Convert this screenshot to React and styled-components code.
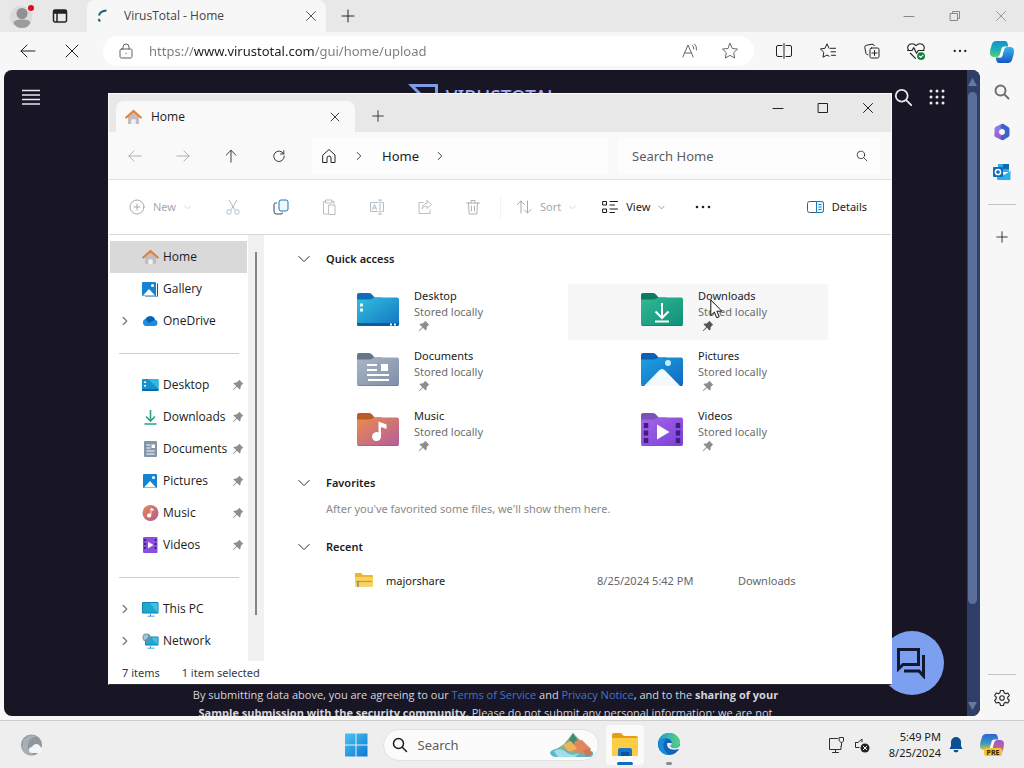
import { useState } from 'react'
import styled, { createGlobalStyle } from 'styled-components'


const GlobalStyle = createGlobalStyle`
	* {
		box-sizing: border-box;
	}

	body {
		margin: 0;
		overflow: hidden;
		font-family: 'Noto Sans', 'Open Sans', sans-serif;
		font-size: 11px;
		line-height: 16px;
		color: #1b1b1b;
	}

	button, input {
		font: inherit;
		color: inherit;
	}

	svg {
		display: block;
		flex: none;
	}
`

const Desktop = styled.div`
	height: 100vh;
	position: relative;
	display: flex;
	flex-direction: column;
	background-color: #f5f5f5;
`

const IconButton = styled.button`
	border: 0;
	padding: 0;
	background: none;
	flex: none;
	width: ${props => props.$width || 40}px;
	height: ${props => props.$height || 32}px;
	color: ${props => props.$color || '#222222'};
	display: flex;
	align-items: center;
	justify-content: center;
`

const Spacer = styled.div`
	flex: 1;
`

/* Browser */

const Browser = styled.section`
	flex: 1;
	min-height: 0;
	display: flex;
	flex-direction: column;
`

const TabStrip = styled.div`
	height: 32px;
	padding-left: 2px;
	background-color: #e8e8e8;
	display: flex;
	align-items: center;
`

const BrowserTab = styled.div`
	width: 239px;
	height: 32px;
	margin-left: 9px;
	padding: 0 2px 0 9px;
	border-radius: 8px 8px 0 0;
	background-color: #f7f7f7;
	color: #444444;
	font-family: 'Open Sans', sans-serif;
	font-size: 12px;
	display: flex;
	align-items: center;
	gap: 16px;
`

const BrowserColumns = styled.div`
	flex: 1;
	min-height: 0;
	display: flex;
`

const BrowserMain = styled.div`
	flex: 1;
	min-width: 0;
	padding: 0 0 4px 4px;
	background-color: #f7f7f7;
	display: flex;
	flex-direction: column;
`

const Toolbar = styled.div`
	height: 38px;
	padding-left: 4px;
	display: flex;
	align-items: center;
	gap: 4px;
`

const AddressBar = styled.label`
	flex: 1;
	height: 30px;
	margin: 0 6px 0 7px;
	padding: 0 4px 0 15px;
	border-radius: 15px;
	background-color: #ffffff;
	color: #5f5f5f;
	display: flex;
	align-items: center;
	gap: 15px;
`

const UrlInput = styled.input`
	flex: 1;
	min-width: 0;
	border: 0;
	padding: 0;
	outline: 0;
	font-size: 13px;
	line-height: 20px;
	color: transparent;
	background-image: linear-gradient(to right, #7b7b7b 45px, #1b1b1b 45px, #1b1b1b 166px, #7b7b7b 166px);
	background-clip: text;
	-webkit-background-clip: text;
`

const AddressActions = styled.div`
	color: #666666;
	display: flex;
`

const EdgeSidebar = styled.aside`
	width: 44px;
	padding-bottom: 2px;
	background-color: #f7f7f7;
	display: flex;
	flex-direction: column;
	align-items: center;
`

const SidebarRule = styled.hr`
	width: 28px;
	margin: ${props => props.$tight ? '0 0 3px' : '12px 0'};
	border: 0;
	border-top: 1px solid #c4c4c4;
`

/* VirusTotal page */

const Page = styled.div`
	flex: 1;
	min-height: 0;
	position: relative;
	border-radius: 8px;
	overflow: hidden;
	background-color: #181624;
	color: #d5d5dd;
	display: flex;
`

const PageContent = styled.div`
	flex: 1;
	display: flex;
	flex-direction: column;
`

const PageHeader = styled.header`
	height: 54px;
	padding: 0 13px 0 7px;
	display: grid;
	grid-template-columns: 1fr auto 1fr;
	align-items: center;
`

const Brand = styled.div`
	color: #a3acf2;
	font-size: 19px;
	font-weight: 500;
	line-height: 26px;
	display: flex;
	align-items: center;
	gap: 8px;
`

const HeaderActions = styled.div`
	justify-self: end;
	color: #e8e8f0;
	display: flex;
`

const Terms = styled.p`
	height: 30px;
	margin: 0;
	overflow: hidden;
	text-align: center;
	font-family: 'Open Sans', sans-serif;
	line-height: 18px;

	a {
		color: #4672c4;
		text-decoration: none;
	}
`

const PageScroll = styled.div`
	width: 13px;
	padding: 8px 3px 6px 0;
	background-color: #2f3f66;
	color: #6878a4;
	display: flex;
	flex-direction: column;
	align-items: center;
	gap: 6px;
`

const PageThumb = styled.div`
	width: 9px;
	height: 81%;
	border-radius: 5px;
	background-color: #5a6e9b;
`

const ChatButton = styled.button`
	position: absolute;
	right: 36px;
	bottom: 21px;
	width: 64px;
	height: 64px;
	border: 0;
	padding: 0;
	border-radius: 50%;
	background-color: #7d9ff0;
	color: #12182f;
	display: flex;
	align-items: center;
	justify-content: center;
`

/* File explorer */

const Window = styled.section`
	position: absolute;
	top: 93px;
	right: 132px;
	bottom: 83px;
	left: 108px;
	border: 1px solid #fafafa;
	border-bottom-color: #2a2a33;
	background-color: #ffffff;
	display: flex;
	flex-direction: column;
`

const WindowTabs = styled.div`
	height: 38px;
	padding-left: 7px;
	background-color: #e8e8e8;
	display: flex;
	align-items: flex-end;
`

const WindowTab = styled.div`
	width: 239px;
	height: 31px;
	padding: 0 0 0 9px;
	border-radius: 8px 8px 0 0;
	background-color: #f9f9f9;
	font-family: 'Open Sans', sans-serif;
	font-size: 12px;
	font-weight: 500;
	display: flex;
	align-items: center;
	gap: 9px;
`

const WindowControls = styled.div`
	align-self: flex-start;
	display: flex;
`

const NavBar = styled.div`
	height: 48px;
	padding: 0 11px 0 2px;
	border-bottom: 1px solid #e0e0e0;
	background-color: #f9f9f9;
	display: flex;
	align-items: center;
`

const Crumbs = styled.nav`
	flex: 1;
	height: 36px;
	margin: 0 10px 0 9px;
	border-radius: 4px;
	background-color: #fdfdfd;
	font-size: 13px;
	display: flex;
	align-items: center;
`

const Crumb = styled.button`
	height: 32px;
	border: 0;
	padding: 0 10px;
	background: none;
`

const SearchBox = styled.label`
	width: 262px;
	height: 36px;
	padding: 0 12px 0 14px;
	border-radius: 4px;
	background-color: #fdfdfd;
	display: flex;
	align-items: center;
`

const SearchInput = styled.input`
	flex: 1;
	min-width: 0;
	border: 0;
	padding: 0;
	outline: 0;
	background: none;
	font-size: 13px;

	&::placeholder {
		color: #5c5c5c;
		opacity: 1;
	}
`

const CommandBar = styled.div`
	height: 55px;
	padding: 0 16px 0 12px;
	border-bottom: 1px solid #d8d8d8;
	display: flex;
	align-items: center;
`

const Command = styled.button`
	height: 32px;
	border: 0;
	padding: 0 8px;
	background: none;
	color: ${props => props.$off ? '#a8a8a8' : '#1b1b1b'};
	display: flex;
	align-items: center;
	gap: 8px;
	margin-right: ${props => props.$last ? 0 : 10}px;
`

const Divider = styled.div`
	width: 1px;
	height: 24px;
	margin: 0 7px 0 3px;
	background-color: #f3f3f3;
`

const WindowBody = styled.div`
	flex: 1;
	min-height: 0;
	display: flex;
`

const NavPane = styled.nav`
	width: 139px;
	padding: 6px 1px 0;
	overflow: hidden;
`

const NavItem = styled.button`
	width: 100%;
	height: 32px;
	border: 0;
	padding: 0 3px 0 8px;
	background-color: ${props => props.$active ? '#d9d9d9' : 'transparent'};
	text-align: left;
	font-family: 'Open Sans', sans-serif;
	font-size: 12px;
	display: flex;
	align-items: center;
`

const NavToggle = styled.span`
	width: 24px;
	color: #7d7d7d;
`

const NavLabel = styled.span`
	flex: 1;
	margin-left: 4px;
	white-space: nowrap;
`

const NavRule = styled.hr`
	margin: 16px 8px 15px 9px;
	border: 0;
	border-top: 1px solid #cfcfcf;
`

const PaneScroll = styled.div`
	width: 16px;
	padding: 17px 7px 46px;
	background-color: #f1f1f1;
`

const PaneThumb = styled.div`
	width: 2px;
	height: 100%;
	background-color: #858585;
`

const Files = styled.main`
	flex: 1;
	min-width: 0;
	padding: 8px 63px 0 20px;
	overflow: hidden;
`

const SectionTitle = styled.h2`
	height: 32px;
	margin: ${props => props.$top || 0}px 0 0;
	padding-left: 13px;
	font-size: 11px;
	font-weight: 600;
	display: flex;
	align-items: center;
	gap: 15px;
`

const Tiles = styled.div`
	margin-top: 9px;
	display: grid;
	grid-template-columns: 1fr 1fr;
	gap: 4px 24px;
`

const Tile = styled.button`
	position: relative;
	height: 56px;
	border: 0;
	padding: 4px 0 0 72px;
	text-align: left;
	background-color: ${props => props.$hover ? '#f7f7f7' : 'transparent'};
	display: flex;
	gap: 14px;
`

const TileText = styled.span`
	display: flex;
	flex-direction: column;

	svg {
		margin: 0 4px;
	}
`

const Muted = styled.span`
	color: #6d6d6d;
`

const Hint = styled.p`
	margin: 2px 0 0 42px;
	color: #8a8a8a;
`

const RecentTable = styled.table`
	width: 100%;
	border-collapse: collapse;
	table-layout: fixed;

	td {
		height: 36px;
		padding: 0;
		color: #666666;
	}
`

const FileName = styled.span`
	padding-left: 71px;
	color: #1b1b1b;
	display: flex;
	align-items: center;
	gap: 13px;
`

const StatusBar = styled.footer`
	height: 23px;
	padding: 0 13px;
	color: #33394a;
	display: flex;
	align-items: center;
	gap: 22px;
`

const Pointer = styled.span`
	position: absolute;
	left: 142px;
	top: 15px;
`

/* Taskbar */

const Taskbar = styled.footer`
	height: 48px;
	border-top: 1px solid #cecece;
	background-color: #eeeeee;
	display: grid;
	grid-template-columns: 1fr auto 1fr;
	align-items: center;
`

const TaskCenter = styled.div`
	display: flex;
	align-items: center;
`

const TaskSearch = styled.label`
	width: 216px;
	height: 32px;
	margin: 0 4px 0 5px;
	padding: 0 3px 0 8px;
	border: 1px solid #e2e2e2;
	border-radius: 16px;
	background-color: #fbfbfb;
	display: flex;
	align-items: center;
	gap: 10px;
`

const TaskApp = styled.button`
	width: ${props => props.$active ? 38 : 44}px;
	height: 40px;
	margin: ${props => props.$active ? '0 3px' : 0};
	border: 0;
	padding: 7px 0 0;
	border-radius: 4px;
	background-color: ${props => props.$active ? '#fafafa' : 'transparent'};
	display: flex;
	flex-direction: column;
	align-items: center;
	justify-content: space-between;

	&::after {
		content: '';
		width: ${props => props.$active ? 16 : 6}px;
		height: 3px;
		border-radius: 2px;
		background-color: ${props => props.$active ? '#0f6cbd' : '#8a8a8a'};
	}
`

const Tray = styled.div`
	justify-self: end;
	padding-right: 9px;
	display: flex;
	align-items: center;
`

const Clock = styled.time`
	width: 66px;
	margin-right: 2px;
	text-align: right;
`

const TrayIcon = styled.button`
	width: ${props => props.$width || 26}px;
	height: 32px;
	border: 0;
	padding: 0;
	background: none;
	color: #303030;
	display: flex;
	align-items: center;
	justify-content: center;
`

/* Icons */

const Line = ({ d, size = 16, stroke = 1, box = 16, children }) => (
	<svg width={size} height={size} viewBox={`0 0 ${box} ${box}`} fill="none" stroke="currentColor" strokeWidth={stroke} strokeLinecap="round" strokeLinejoin="round">
		<path d={d} />
		{children}
	</svg>
)

const paths = {
	close: 'M3.5 3.5l9 9M12.5 3.5l-9 9',
	plus: 'M8 2v12M2 8h12',
	minus: 'M3 8.500h10',
	square: 'M3.500 3.500h9v9h-9z',
	restore: 'M3.500 5.500h7v7h-7zM5.500 5.500v-2h7v7h-2',
	back: 'M15 8H1M7 2L1 8l6 6',
	forward: 'M1 8h14M9 2l6 6-6 6',
	up: 'M8 15V1.500M2.500 7L8 1.500 13.500 7',
	refresh: 'M13.300 5.500A6 6 0 1 0 14 8M13.500 2v3.700H9.800',
	home: 'M2 7l6-5.500L14 7v7.500h-4V10a2 2 0 0 0-4 0v4.500H2z',
	right: 'M6 4l4 4-4 4',
	down: 'M2 5l6 6 6-6',
	search: 'M10.500 10.500L14.500 14.500M11.500 6.500a5 5 0 1 1-10 0 5 5 0 0 1 10 0z',
	lock: 'M3.500 6h9a1.500 1.500 0 0 1 1.500 1.500v6a1.500 1.500 0 0 1-1.500 1.500h-9A1.500 1.500 0 0 1 2 13.500v-6A1.500 1.500 0 0 1 3.500 6zM5 6V4a3 3 0 0 1 6 0v2M8 10.300v.4',
	star: 'M8 .5l2.300 5 5.200.6-3.800 3.600 1 5.300L8 12.400 3.300 15l1-5.300L.5 6.100l5.200-.6z',
	split: 'M6 2.500H2A1.500 1.500 0 0 0 .5 4v8A1.500 1.500 0 0 0 2 13.500h4M10 2.500h4A1.500 1.500 0 0 1 15.500 4v8a1.500 1.500 0 0 1-1.500 1.500h-4M8 .5v15',
	favorites: 'M10.500 5.300H15.500M11 8.800h4.500M11.500 12.300h4M9 5.300L7 .8 5 5.300l-4.600.7L3.800 9.300 3 14.200l4-2.200 2.200 1.200',
	collections: 'M7.500 5h6a1.500 1.500 0 0 1 1.500 1.500v7a1.500 1.500 0 0 1-1.500 1.500h-6A1.500 1.500 0 0 1 6 13.500v-7A1.500 1.500 0 0 1 7.500 5zM10.500 7.500v5M8 10h5M3.800 11.800A2 2 0 0 1 2 10.500L.8 4.500A2 2 0 0 1 2.300 2.300L8 1.200a2 2 0 0 1 2.300 1.500',
	workspace: 'M3 2h10a1.500 1.500 0 0 1 1.500 1.500v9A1.500 1.500 0 0 1 13 14H3a1.500 1.500 0 0 1-1.500-1.500v-9A1.500 1.500 0 0 1 3 2zM2 3.500h12M1.500 5h13M5 5v9',
	addCircle: 'M15 8A7 7 0 1 1 1 8a7 7 0 0 1 14 0zM8 5v6M5 8h6',
	paste: 'M5 2.500H2.500v12.500h4M11 2.500h2V5M5 1h6v3H5zM8 6h6v9.500H8z',
	rename: 'M9 3.500H1.500v9H9M12.500 3.500h2v9h-2M11 1v14M9.500 1h3M9.500 15h3M3.500 10.500l2-5 2 5M4.200 9h2.600',
	share: 'M6 3.500H2v11h11V11M10 1.500L14.500 5.500 10 9.500V7C7.500 7 6 8 5 10c.2-3.500 2-5.500 5-6z',
	trash: 'M1.500 4h13M6 4V1.500h4V4M3.500 4l.7 11h7.600l.7-11M6.500 7v5M9.500 7v5',
	sort: 'M5 14V2M1.500 5.500L5 2l3.500 3.500M11.500 2v12M8.500 11l3 3 3.500-3.500',
	view: 'M1 2.500h3.500v3.500H1zM1 10h3.500v3.500H1zM8 2.500h7.500M8 6h4.500M8 10h7.500M8 13.500h4.500',
	monitor: 'M9.500 1.500H1.500v11H13V9M4.500 15.500h6M7.500 12.500v3M11.500.5h4v3.500L13.500 6l-2-2zM13.500 6v3',
	speaker: 'M1.500 5.500h2.500l4-3.500V5M5 10.500H1.500v-5'
}

const Dots = ({ size = 16 }) => (
	<svg width={size} height={size} viewBox="0 0 16 16" fill="currentColor">
		<circle cx="2" cy="8" r="1.300" />
		<circle cx="8" cy="8" r="1.300" />
		<circle cx="14" cy="8" r="1.300" />
	</svg>
)

const Pin = ({ color = '#8d8d8d' }) => (
	<svg width="12" height="12" viewBox="0 0 12 12" fill={color}>
		<path d="M7.200 .8L11.200 4.800 10 5.600 8.600 7.400V9.600L7.600 10.600 4.900 7.700 1.200 11.200.7 10.700 4.300 7.100 1.500 4.400 2.500 3.400H4.600L6.400 2z" />
	</svg>
)

const Avatar = () => (
	<svg width="26" height="26" viewBox="0 0 26 26">
		<circle cx="12" cy="14" r="11" fill="#dadada" />
		<circle cx="13" cy="10.500" r="5.500" fill="#909090" />
		<path d="M4.500 20c0-2 3-3.500 8.500-3.500s8.500 1.500 8.500 3.500c-1.500 3-4.500 5-8.500 5s-7-2-8.500-5z" fill="#9c9c9c" />
		<circle cx="22" cy="5" r="3" fill="#dc0f1c" />
	</svg>
)

const HomeIcon = () => (
	<svg width="17" height="16" viewBox="0 0 17 16">
		<path d="M3 7l5.500-5L14 7v8h-3.500v-4.500h-4V15H3z" fill="#c3bdc0" />
		<path d="M6.500 10.500h4V15h-4z" fill="#f3f0f0" />
		<path d="M1.200 8.500L8.500 2l7.300 6.500" fill="none" stroke="#de8240" strokeWidth="2.200" strokeLinecap="round" strokeLinejoin="round" />
	</svg>
)

const PictureIcon = ({ stacked }) => (
	<svg width="17" height="16" viewBox="0 0 17 16">
		{stacked && <path d="M3 2.500h13v13H3z" fill="#0d56a6" />}
		{stacked && <path d="M14.500 1v14" stroke="#ffffff" />}
		<rect x={stacked ? 0 : 1} y="1" width="14" height="14" rx="1" fill="#1583d3" />
		<path d={stacked ? 'M1 14.500l6-6.500 6 6.500z' : 'M2 14.500L8 8l6 6.500z'} fill="#ffffff" />
		<circle cx={stacked ? 10.500 : 11.500} cy="4.500" r="1.500" fill="#ffffff" />
	</svg>
)

const CloudIcon = () => (
	<svg width="17" height="16" viewBox="0 0 17 16">
		<path d="M4 13a3.600 3.600 0 0 1-.5-7A5.200 5.200 0 0 1 13 6.800 3.200 3.200 0 0 1 13.300 13z" fill="#1a8fe0" />
		<path d="M3.500 6A5.200 5.200 0 0 1 13 6.800L7 10z" fill="#0a5fb8" />
	</svg>
)

const DesktopIcon = () => (
	<svg width="17" height="16" viewBox="0 0 17 16">
		<rect x="0" y="2" width="16.500" height="12" rx="1" fill="#1593cc" />
		<path d="M6 2h9.500a1 1 0 0 1 1 1v9z" fill="#31b8e0" />
		<path d="M0 12h16.500v1a1 1 0 0 1-1 1H1a1 1 0 0 1-1-1z" fill="#0b67ad" />
		<path d="M2 4.500h2v1.500H2zM2 8h2v1.500H2z" fill="#ffffff" />
	</svg>
)

const DownloadIcon = () => (
	<svg width="17" height="16" viewBox="0 0 17 16" fill="none" stroke="#2aa283" strokeWidth="1.600">
		<path d="M8.500 1v10.500M4 7.500l4.500 4.500L13 7.500M2.500 15h12" />
	</svg>
)

const DocumentIcon = () => (
	<svg width="17" height="16" viewBox="0 0 17 16">
		<rect x="2" y="0" width="13" height="16" rx="1" fill="#8596aa" />
		<path d="M4.500 4h4M4.500 7h4M4.500 10h8M4.500 13h8" stroke="#ffffff" />
		<path d="M9.500 3.500h3.500v3.500H9.500z" fill="#ffffff" />
	</svg>
)

const MusicIcon = () => (
	<svg width="17" height="16" viewBox="0 0 17 16">
		<defs>
			<linearGradient id="disc" x1="0" y1="0" x2="1" y2="1">
				<stop offset="0" stopColor="#e58a58" />
				<stop offset="1" stopColor="#b5598c" />
			</linearGradient>
		</defs>
		<circle cx="8.500" cy="8" r="8" fill="url(#disc)" />
		<path d="M8.500 3l3 1v1.800L9.300 5.200v5.300a2.100 2.100 0 1 1-.8-1.700z" fill="#ffffff" />
	</svg>
)

const VideoIcon = () => (
	<svg width="17" height="16" viewBox="0 0 17 16">
		<rect x="1" y="0" width="14.500" height="16" rx="1" fill="#8a4fe0" />
		<path d="M3 2v12M13.500 2v12" stroke="#3c1c86" strokeWidth="1.800" strokeDasharray="2 2" />
		<path d="M6 4.800L11.500 8 6 11.200z" fill="#ffffff" />
	</svg>
)

const ComputerIcon = ({ network }) => (
	<svg width="17" height="16" viewBox="0 0 17 16">
		<rect x={network ? 3 : 0} y={network ? 3.500 : 1} width={network ? 13.500 : 16.500} height={network ? 9 : 11.500} rx="1" fill="#0f7fb4" />
		<path d={network ? 'M4 4.500h11.500v7H4z' : 'M1 2h14.500v9.500H1z'} fill="#20a9cf" />
		<path d={network ? 'M9 4.500h6.500v7z' : 'M8 2h7.500v9.500z'} fill="#3cc6dc" />
		<path d="M8.500 12.500v2.500M5.500 15.200h7" stroke="#4b9fd4" />
		{network && <circle cx="4.500" cy="4.500" r="4" fill="#6d8ea5" />}
		{network && <path d="M1.500 3l3-2 2 2-2 3-3 1z" fill="#9ccbe0" />}
	</svg>
)

const folders = {
	desktop: ['#0f6cb8', '#31c0dd', '#1474c4'],
	downloads: ['#0c7a60', '#30b893', '#109078'],
	documents: ['#66768a', '#a9b5c6', '#7f8fa7'],
	pictures: ['#0f5fb5', '#1ea0e2', '#1069bd'],
	music: ['#b85e22', '#ea8c4e', '#b45c9c'],
	videos: ['#7d52b8', '#a566e8', '#7b40d6']
}

const marks = {
	desktop: <>
		<path d="M1 30h42v1a2 2 0 0 1-2 2H3a2 2 0 0 1-2-2z" fill="#0b5f9f" />
		<path d="M4 10.500h3v3H4zM4 15.500h3v3H4zM34 30.500h2v2h-2zM38 30.500h2v2h-2z" fill="#e9fbff" />
	</>,
	downloads: <path d="M22 10v15M15.500 18.500l6.500 6.500 6.500-6.500M15 28.500h14" fill="none" stroke="#ffffff" strokeWidth="2" />,
	documents: <>
		<path d="M11 12h10M11 17h10M11 22h22M12 27h21" stroke="#ffffff" strokeWidth="2" />
		<path d="M25 11h7v7h-7z" fill="#ffffff" />
	</>,
	pictures: <>
		<path d="M4 33L19 17.500q3-3 6 0L40 33z" fill="#f3faff" />
		<circle cx="28" cy="10" r="3" fill="#c5ecff" />
	</>,
	music: <path d="M22.500 8.500l8 3V16l-5.500-2v9.500a4.500 4.500 0 1 1-2.500-4z" fill="#ffffff" />,
	videos: <>
		<path d="M6 10v20M38 10v20" stroke="#411d82" strokeWidth="4.500" strokeDasharray="5 2.500" />
		<path d="M17 11.500L29.500 19 17 26.500z" fill="#ffffff" />
	</>
}

const Folder = ({ kind }) => {
	const [tab, from, to] = folders[kind]

	return (
		<svg width="44" height="44" viewBox="0 -5 44 44">
			<defs>
				<linearGradient id={`folder-${kind}`} x1="0" y1="0" x2="1" y2="1">
					<stop offset="0" stopColor={from} />
					<stop offset="1" stopColor={to} />
				</linearGradient>
			</defs>
			<path d="M1 2a2 2 0 0 1 2-2h10q2 0 3.500 2l2 2.500H26V12H1z" fill={tab} />
			<path d="M1 6.500h12q2 0 3.500-1T20 4.500h21a2 2 0 0 1 2 2V31a2 2 0 0 1-2 2H3a2 2 0 0 1-2-2z" fill={`url(#folder-${kind})`} />
			<path d="M1.500 32.500h41" stroke={tab} strokeOpacity=".6" />
			{marks[kind]}
		</svg>
	)
}

const ZipFolder = () => (
	<svg width="18" height="16" viewBox="0 0 18 16">
		<path d="M0 1a1 1 0 0 1 1-1h5l2 2h9a1 1 0 0 1 1 1v9.500a1 1 0 0 1-1 1H1a1 1 0 0 1-1-1z" fill="#e9b738" />
		<path d="M0 4h18v8.500a1 1 0 0 1-1 1H1a1 1 0 0 1-1-1z" fill="#fad35f" />
		<path d="M1 8.500h16" stroke="#b39a5c" strokeWidth="1.200" />
		<path d="M3 8v6" stroke="#8a8a80" strokeWidth="1.500" />
	</svg>
)

const Copilot = ({ pre }) => (
	<svg width="24" height="24" viewBox="0 0 24 24">
		<defs>
			<linearGradient id={pre ? 'cp-a' : 'cp-c'} x1="0" y1="0" x2="0" y2="1">
				<stop offset="0" stopColor={pre ? '#2c62d8' : '#1590d0'} />
				<stop offset=".6" stopColor={pre ? '#3a9cc0' : '#22b3b0'} />
				<stop offset="1" stopColor={pre ? '#e8c33a' : '#5fd06a'} />
			</linearGradient>
			<linearGradient id={pre ? 'cp-b' : 'cp-d'} x1="0" y1="0" x2="0" y2="1">
				<stop offset="0" stopColor={pre ? '#9657d8' : '#3cb4f0'} />
				<stop offset="1" stopColor={pre ? '#f0764c' : '#1457bf'} />
			</linearGradient>
		</defs>
		<path d="M6 1h9q2 0 2.500 2l.8 3.500H14q-2 0-2.500 2L10 14q-.8 3-3.500 3H4q-4 0-4-4 0-4 2-9 1.200-3 4-3z" fill={`url(#${pre ? 'cp-a' : 'cp-c'})`} />
		<path d="M18 23H9q-2 0-2.500-2l-.8-3.500H10q2 0 2.500-2L14 10q.8-3 3.500-3H20q4 0 4 4 0 4-2 9-1.200 3-4 3z" fill={`url(#${pre ? 'cp-b' : 'cp-d'})`} />
		<path d="M13.500 7h2l-1.500 2-2.500 8.500H9L10.500 15z" fill="#ffffff" fillOpacity=".9" />
		{pre && <rect x="4" y="15" width="18" height="8" rx="2" fill="#f5c32c" />}
		{pre && <text x="13" y="21.500" textAnchor="middle" fontSize="7" fontWeight="700" fill="#33240a">PRE</text>}
	</svg>
)

const Microsoft365 = () => (
	<svg width="18" height="18" viewBox="0 0 18 18" fill="none" strokeWidth="5" strokeLinejoin="round" strokeLinecap="round">
		<path d="M9 3.500L4 6v5" stroke="#8c78e8" />
		<path d="M4 12l5 2.500" stroke="#a65fd0" />
		<path d="M10 3.500L14 6v6l-4 2.500" stroke="#3d62cc" />
		<circle cx="9" cy="9" r="2.800" fill="#f7f7f7" stroke="none" />
	</svg>
)

const Outlook = () => (
	<svg width="18" height="18" viewBox="0 0 18 18">
		<path d="M5 1h11v8H5z" fill="#37a6e6" />
		<path d="M10 1h6v5h-6z" fill="#1068b8" />
		<path d="M4 8l7 4 6.500-4v8a1 1 0 0 1-1 1H5a1 1 0 0 1-1-1z" fill="#25b1ea" />
		<rect x="0" y="4" width="10" height="10" rx="1" fill="#0f6cbd" />
		<circle cx="5" cy="9" r="2.600" fill="none" stroke="#ffffff" strokeWidth="1.500" />
	</svg>
)

const Gear = () => (
	<svg width="18" height="18" viewBox="0 0 24 24" fill="none" stroke="#2b2b2b" strokeWidth="1.500" strokeLinejoin="round">
		<circle cx="12" cy="12" r="3" />
		<path d="M10 2h4l.8 3 2 1.200 3-.9 2 3.500L19.600 11v2l2.200 2.200-2 3.500-3-.9-2 1.200-.8 3h-4l-.8-3-2-1.200-3 .9-2-3.500L4.400 13v-2L2.200 8.800l2-3.500 3 .9 2-1.200z" />
	</svg>
)

const EssentialsIcon = () => (
	<Line d="M1.500 7.500C-.5 4.500 1.500 1.500 4.500 1.500 6 1.500 7 2 8 3.200 9 2 10 1.500 11.500 1.500c3 0 5 3 3 6M.5 7.500H4.500L6 5l2.500 5L10 7.500h5M3 10l4.500 4.500" size={18}>
		<circle cx="12.500" cy="12.500" r="3.500" fill="#13803e" stroke="none" />
		<path d="M11 12.500l1.200 1.200 2-2" stroke="#ffffff" />
	</Line>
)

const ReadAloud = () => (
	<Line d="M.8 14L6 2l5.200 12M2.500 10h7M10.500 2.500q1.500 1.200 1.200 3.500M12.500 1q2.500 2 2 6" />
)

const CopyIcon = () => (
	<svg width="16" height="16" viewBox="0 0 16 16" fill="none">
		<path d="M4 4H2.500A1.500 1.500 0 0 0 1 5.500v7A2.500 2.500 0 0 0 3.500 15H8a1.500 1.500 0 0 0 1.500-1.500" stroke="#2d4558" />
		<rect x="6" y="1" width="9" height="11" rx="2" stroke="#1879bd" fill="#eef8ff" />
	</svg>
)

const CutIcon = () => (
	<svg width="16" height="16" viewBox="0 0 16 16" fill="none" stroke="#b4b8bd">
		<path d="M4 1l6 10M12 1L6 11" />
		<circle cx="4" cy="13" r="2.300" stroke="#a9c3de" />
		<circle cx="12" cy="13" r="2.300" stroke="#a9c3de" />
	</svg>
)

const DetailsIcon = () => (
	<svg width="17" height="14" viewBox="0 0 17 14" fill="none">
		<rect x=".5" y="1.500" width="16" height="11" rx="2" stroke="#3f5a6e" />
		<path d="M9.500 1.500h5a2 2 0 0 1 2 2v7a2 2 0 0 1-2 2h-5z" stroke="#1879bd" fill="#e8f5ff" />
		<path d="M11.500 4.500h3M11.500 7h3M11.500 9.500h3" stroke="#1879bd" />
	</svg>
)

const VirusTotalMark = () => (
	<svg width="30" height="26" viewBox="0 0 30 26" fill="none" stroke="#7f9ce8" strokeWidth="3">
		<path d="M3.500 1.500h25v23h-25L15 13z" />
	</svg>
)

const AppsGrid = () => (
	<svg width="16" height="16" viewBox="0 0 16 16" fill="currentColor">
		{[2, 8, 14].map(y => [2, 8, 14].map(x => <circle key={`${x}-${y}`} cx={x} cy={y} r="1.500" />))}
	</svg>
)

const Triangle = ({ down }) => (
	<svg width="9" height="8" viewBox="0 0 9 8" fill="currentColor">
		<path d={down ? 'M0 0h9L4.500 8z' : 'M0 8h9L4.500 0z'} />
	</svg>
)

const ChatIcon = () => (
	<svg width="32" height="32" viewBox="0 0 32 32" fill="none" stroke="currentColor" strokeWidth="3">
		<path d="M2.500 2.500h20v15H7l-4.500 4.500z" />
		<path d="M27.500 8v21L23 24H8" />
	</svg>
)

const ArrowCursor = () => (
	<svg width="13" height="20" viewBox="0 0 13 20" fill="#ffffff" stroke="#111111">
		<path d="M.8 1v15.500l3.600-3.400 2.300 5.600 2.500-1-2.300-5.500h5z" />
	</svg>
)

const Weather = () => (
	<svg width="24" height="24" viewBox="0 0 24 24">
		<circle cx="11.500" cy="12" r="10.500" fill="#8d979d" />
		<path d="M3 8a10 10 0 0 1 14-4.500Q9 4 8 11t6 11Q5 23 2 16z" fill="#a8b0b5" />
		<path d="M12 20a3 3 0 0 1 0-6 4.500 4.500 0 0 1 8-1q3 3 1.500 6-1 1.500-3 1z" fill="#f3f6f8" />
	</svg>
)

const WindowsLogo = () => (
	<svg width="24" height="24" viewBox="0 0 24 24">
		<defs>
			<linearGradient id="win" x1="0" y1="0" x2="1" y2="1">
				<stop offset="0" stopColor="#4cc4f2" />
				<stop offset="1" stopColor="#0b78d3" />
			</linearGradient>
		</defs>
		<path d="M1 .5h10.500V11.500H1zM12.500 .5H23.500V11.500H12.500zM1 12.500h10.500V23.500H1zM12.500 12.500h11v11h-11z" fill="url(#win)" />
	</svg>
)

const SearchArt = () => (
	<svg width="46" height="28" viewBox="0 0 46 28">
		<path d="M6 19l9-6 9-11 8 8 10 8-4 8H8z" fill="#8fb08a" />
		<path d="M20 9l4-7 5 8-4 5z" fill="#3f8a74" />
		<path d="M26 10l7-1 9 9-7 6-12-5z" fill="#e0885a" />
		<path d="M14 14l8-4 6 8-8 3z" fill="#edb45c" />
		<path d="M1 21q5-5 12-3t9 4 21-2q3 3-1 6H8Q1 26 1 21z" fill="#5bb8cc" />
		<path d="M5 20q7-4 12 1t14 1l-5 4H9z" fill="#a3dde8" />
		<path d="M34 19l6-1 4 5-7 3z" fill="#c87a58" />
	</svg>
)

const ExplorerLogo = () => (
	<svg width="26" height="26" viewBox="0 0 26 26">
		<path d="M0 3a2 2 0 0 1 2-2h7l3 3h12a2 2 0 0 1 2 2v16H0z" fill="#e69d18" />
		<path d="M0 6h26v17a1 1 0 0 1-1 1H1a1 1 0 0 1-1-1z" fill="#fccc45" />
		<path d="M6 24v-6a2 2 0 0 1 2-2h10a2 2 0 0 1 2 2v6z" fill="#1974c8" />
		<path d="M9 20h8v4H9z" fill="#0d539e" />
	</svg>
)

const EdgeLogo = () => (
	<svg width="24" height="24" viewBox="0 0 26 26">
		<defs>
			<linearGradient id="edge" x1="0" y1="0" x2="1" y2="0">
				<stop offset="0" stopColor="#1f9fdc" />
				<stop offset="1" stopColor="#58d378" />
			</linearGradient>
		</defs>
		<circle cx="13" cy="13" r="12" fill="#0f63b8" />
		<path d="M1.500 12C3 4 8 1 13 1c7 0 12 5 12 10.500 0 4-3 6-6.500 6-3 0-4-1.200-4-2.200s1.500-1.500 1.500-4C16 9 13.500 7 10 7c-4 0-7.500 2-8.500 5z" fill="url(#edge)" />
		<path d="M11 12c-1 6 5 8.500 12.500 6.500L26 16l-1-2c-1 2.500-3.500 3.500-6.500 3.500-3 0-4-1.200-4-2.200s1.500-1.500 1.500-3.500z" fill="#eeeeee" />
		<path d="M1.500 12C3 8 7 7 10 8.500 5 11 6 21 14 25 6 25.500 .5 19 1.500 12z" fill="#168dd4" />
	</svg>
)

const Bell = () => (
	<svg width="14" height="16" viewBox="0 0 14 16" fill="#0b4f94">
		<path d="M7 0a5 5 0 0 1 5 5v4l1.500 3H.5L2 9V5a5 5 0 0 1 5-5zM4.500 13h5a2.500 2.500 0 0 1-5 0z" />
	</svg>
)

const SpeakerIcon = () => (
	<Line d={paths.speaker}>
		<circle cx="11" cy="11" r="4.500" fill="#222222" stroke="none" />
		<path d="M9.300 9.300l3.400 3.400M12.700 9.300l-3.400 3.400" stroke="#ffffff" />
	</Line>
)

const navItems = [
	{ name: 'Home', icon: <HomeIcon /> },
	{ name: 'Gallery', icon: <PictureIcon stacked /> },
	{ name: 'OneDrive', icon: <CloudIcon />, expands: true },
	null,
	{ name: 'Desktop', icon: <DesktopIcon />, pinned: true },
	{ name: 'Downloads', icon: <DownloadIcon />, pinned: true },
	{ name: 'Documents', icon: <DocumentIcon />, pinned: true },
	{ name: 'Pictures', icon: <PictureIcon />, pinned: true },
	{ name: 'Music', icon: <MusicIcon />, pinned: true },
	{ name: 'Videos', icon: <VideoIcon />, pinned: true },
	null,
	{ name: 'This PC', icon: <ComputerIcon />, expands: true },
	{ name: 'Network', icon: <ComputerIcon network />, expands: true }
]

const quickAccess = ['Desktop', 'Downloads', 'Documents', 'Pictures', 'Music', 'Videos']

const BrowserWindow = () => {
	const [url, setUrl] = useState('https://www.virustotal.com/gui/home/upload')

	return (
		<Browser>
			<TabStrip>
				<IconButton aria-label="Profile"><Avatar /></IconButton>
				<IconButton $width={36} aria-label="Workspaces"><Line d={paths.workspace} stroke={1.500} /></IconButton>
				<BrowserTab>
					<svg width="12" height="14" viewBox="0 0 12 14" fill="none" stroke="#1f5f7e" strokeWidth="2">
						<path d="M10.500 1.500Q4 2 3 6.500M2.500 10l1.500 2.500" />
					</svg>
					VirusTotal - Home
					<Spacer />
					<IconButton $width={26} $color="#555555" aria-label="Close tab"><Line d={paths.close} /></IconButton>
				</BrowserTab>
				<IconButton $width={44} aria-label="New tab"><Line d={paths.plus} /></IconButton>
				<Spacer />
				<IconButton $width={46} $color="#888888" aria-label="Minimize"><Line d={paths.minus} /></IconButton>
				<IconButton $width={46} $color="#888888" aria-label="Restore"><Line d={paths.restore} /></IconButton>
				<IconButton $width={46} $color="#999999" aria-label="Close"><Line d={paths.close} /></IconButton>
			</TabStrip>
			<BrowserColumns>
				<BrowserMain>
					<Toolbar>
						<IconButton aria-label="Back"><Line d={paths.back} /></IconButton>
						<IconButton aria-label="Stop"><Line d="M2 2l12 12M14 2L2 14" /></IconButton>
						<AddressBar>
							<Line d={paths.lock} />
							<UrlInput aria-label="Address" value={url} onChange={e => setUrl(e.target.value)} />
							<AddressActions>
								<IconButton $color="#666666" aria-label="Read aloud"><ReadAloud /></IconButton>
								<IconButton $color="#666666" aria-label="Add to favorites"><Line d={paths.star} /></IconButton>
							</AddressActions>
						</AddressBar>
						<IconButton aria-label="Split screen"><Line d={paths.split} /></IconButton>
						<IconButton aria-label="Favorites"><Line d={paths.favorites} /></IconButton>
						<IconButton aria-label="Collections"><Line d={paths.collections} /></IconButton>
						<IconButton aria-label="Browser essentials"><EssentialsIcon /></IconButton>
						<IconButton aria-label="Settings and more"><Dots size={14} /></IconButton>
					</Toolbar>
					<Page>
						<PageContent>
							<PageHeader>
								<IconButton $color="#e8e8f0" aria-label="Menu"><Line d="M0 2.500h18M0 7h18M0 11.500h18M0 16h18" box={18} size={18} stroke={1.500} /></IconButton>
								<Brand><VirusTotalMark />VIRUSTOTAL</Brand>
								<HeaderActions>
									<IconButton $width={34} $color="#e8e8f0" aria-label="Search"><Line d={paths.search} size={19} stroke={1.500} /></IconButton>
									<IconButton $width={34} $color="#e8e8f0" aria-label="Apps"><AppsGrid /></IconButton>
								</HeaderActions>
							</PageHeader>
							<Spacer />
							<Terms>
								By submitting data above, you are agreeing to our <a href="#terms">Terms of Service</a> and <a href="#privacy">Privacy Notice</a>, and to the <b>sharing of your<br />Sample submission with the security community.</b> Please do not submit any personal information; we are not
							</Terms>
						</PageContent>
						<PageScroll>
							<Triangle />
							<PageThumb />
							<Spacer />
							<Triangle down />
						</PageScroll>
						<ChatButton aria-label="Chat"><ChatIcon /></ChatButton>
					</Page>
				</BrowserMain>
				<EdgeSidebar>
					<IconButton $height={40} aria-label="Copilot"><Copilot /></IconButton>
					<IconButton $height={40} $color="#707070" aria-label="Search"><Line d={paths.search} stroke={2} /></IconButton>
					<IconButton $height={40} aria-label="Microsoft 365"><Microsoft365 /></IconButton>
					<IconButton $height={40} aria-label="Outlook"><Outlook /></IconButton>
					<SidebarRule />
					<IconButton $height={40} aria-label="Customize"><Line d={paths.plus} size={14} /></IconButton>
					<Spacer />
					<SidebarRule $tight />
					<IconButton $height={40} aria-label="Settings"><Gear /></IconButton>
				</EdgeSidebar>
			</BrowserColumns>
		</Browser>
	)
}

const Explorer = () => {
	const [active, setActive] = useState('Home')

	return (
		<Window>
			<WindowTabs>
				<WindowTab>
					<HomeIcon />
					Home
					<Spacer />
					<IconButton aria-label="Close tab"><Line d={paths.close} size={14} /></IconButton>
				</WindowTab>
				<IconButton $width={46} aria-label="New tab"><Line d={paths.plus} size={14} /></IconButton>
				<Spacer />
				<WindowControls>
					<IconButton $width={46} $height={28} aria-label="Minimize"><Line d={paths.minus} /></IconButton>
					<IconButton $width={44} $height={28} aria-label="Maximize"><Line d={paths.square} /></IconButton>
					<IconButton $width={46} $height={28} aria-label="Close"><Line d={paths.close} /></IconButton>
				</WindowControls>
			</WindowTabs>
			<NavBar>
				<IconButton $width={48} $color="#a5a5a5" aria-label="Back"><Line d={paths.back} size={14} /></IconButton>
				<IconButton $width={48} $color="#a5a5a5" aria-label="Forward"><Line d={paths.forward} size={14} /></IconButton>
				<IconButton $width={48} aria-label="Up"><Line d={paths.up} size={14} /></IconButton>
				<IconButton $width={48} aria-label="Refresh"><Line d={paths.refresh} size={14} /></IconButton>
				<Crumbs>
					<IconButton $width={34} aria-label="Home"><Line d={paths.home} /></IconButton>
					<IconButton $width={26} aria-label="Expand"><Line d={paths.right} size={14} /></IconButton>
					<Crumb>Home</Crumb>
					<IconButton $width={22} aria-label="Expand"><Line d={paths.right} size={14} /></IconButton>
				</Crumbs>
				<SearchBox>
					<SearchInput aria-label="Search Home" placeholder="Search Home" />
					<Line d={paths.search} size={12} />
				</SearchBox>
			</NavBar>
			<CommandBar>
				<Command $off><Line d={paths.addCircle} />New<Line d={paths.down} size={7} /></Command>
				<IconButton $width={48} aria-label="Cut"><CutIcon /></IconButton>
				<IconButton $width={48} aria-label="Copy"><CopyIcon /></IconButton>
				<IconButton $width={48} $color="#b6bfc6" aria-label="Paste"><Line d={paths.paste} /></IconButton>
				<IconButton $width={48} $color="#b6bfc6" aria-label="Rename"><Line d={paths.rename} /></IconButton>
				<IconButton $width={48} $color="#b6bfc6" aria-label="Share"><Line d={paths.share} /></IconButton>
				<IconButton $width={48} $color="#b0b0b0" aria-label="Delete"><Line d={paths.trash} /></IconButton>
				<Divider />
				<Command $off><Line d={paths.sort} />Sort<Line d={paths.down} size={7} /></Command>
				<Command><Line d={paths.view} />View<Line d={paths.down} size={7} /></Command>
				<IconButton aria-label="See more"><Dots /></IconButton>
				<Spacer />
				<Command $last><DetailsIcon />Details</Command>
			</CommandBar>
			<WindowBody>
				<NavPane>
					{
						navItems.map((item, key) => item ? (
							<NavItem key={key} $active={active === item.name} onClick={() => setActive(item.name)}>
								<NavToggle>{item.expands && <Line d={paths.right} size={14} stroke={1.500} />}</NavToggle>
								{item.icon}
								<NavLabel>{item.name}</NavLabel>
								{item.pinned && <Pin />}
							</NavItem>
						) : <NavRule key={key} />)
					}
				</NavPane>
				<PaneScroll><PaneThumb /></PaneScroll>
				<Files>
					<SectionTitle><Line d={paths.down} size={14} />Quick access</SectionTitle>
					<Tiles>
						{
							quickAccess.map(name => (
								<Tile key={name} $hover={name === 'Downloads'}>
									<Folder kind={name.toLowerCase()} />
									<TileText>
										<span>{name}</span>
										<Muted>Stored locally</Muted>
										<Pin color={name === 'Downloads' ? '#555555' : '#8d8d8d'} />
									</TileText>
									{name === 'Downloads' && <Pointer><ArrowCursor /></Pointer>}
								</Tile>
							))
						}
					</Tiles>
					<SectionTitle $top={7}><Line d={paths.down} size={14} />Favorites</SectionTitle>
					<Hint>After you've favorited some files, we'll show them here.</Hint>
					<SectionTitle $top={14}><Line d={paths.down} size={14} />Recent</SectionTitle>
					<RecentTable>
						<colgroup>
							<col />
							<col width="141" />
							<col width="90" />
						</colgroup>
						<tbody>
							<tr>
								<td><FileName><ZipFolder />majorshare</FileName></td>
								<td>8/25/2024 5:42 PM</td>
								<td>Downloads</td>
							</tr>
						</tbody>
					</RecentTable>
				</Files>
			</WindowBody>
			<StatusBar>
				<span>7 items</span>
				<span>1 item selected</span>
			</StatusBar>
		</Window>
	)
}

const App = () => (
	<Desktop>
		<GlobalStyle />
		<BrowserWindow />
		<Explorer />
		<Taskbar>
			<IconButton $width={64} $height={44} aria-label="Widgets"><Weather /></IconButton>
			<TaskCenter>
				<IconButton $width={44} $height={44} aria-label="Start"><WindowsLogo /></IconButton>
				<TaskSearch>
					<Line d={paths.search} stroke={1.500} />
					<SearchInput aria-label="Search" placeholder="Search" />
					<SearchArt />
				</TaskSearch>
				<TaskApp $active aria-label="File Explorer"><ExplorerLogo /></TaskApp>
				<TaskApp aria-label="Microsoft Edge"><EdgeLogo /></TaskApp>
			</TaskCenter>
			<Tray>
				<TrayIcon aria-label="Network"><Line d={paths.monitor} /></TrayIcon>
				<TrayIcon aria-label="Volume"><SpeakerIcon /></TrayIcon>
				<Clock>5:49 PM<br />8/25/2024</Clock>
				<TrayIcon aria-label="Notifications"><Bell /></TrayIcon>
				<TrayIcon $width={46} aria-label="Copilot preview"><Copilot pre /></TrayIcon>
			</Tray>
		</Taskbar>
	</Desktop>
)

export default App
